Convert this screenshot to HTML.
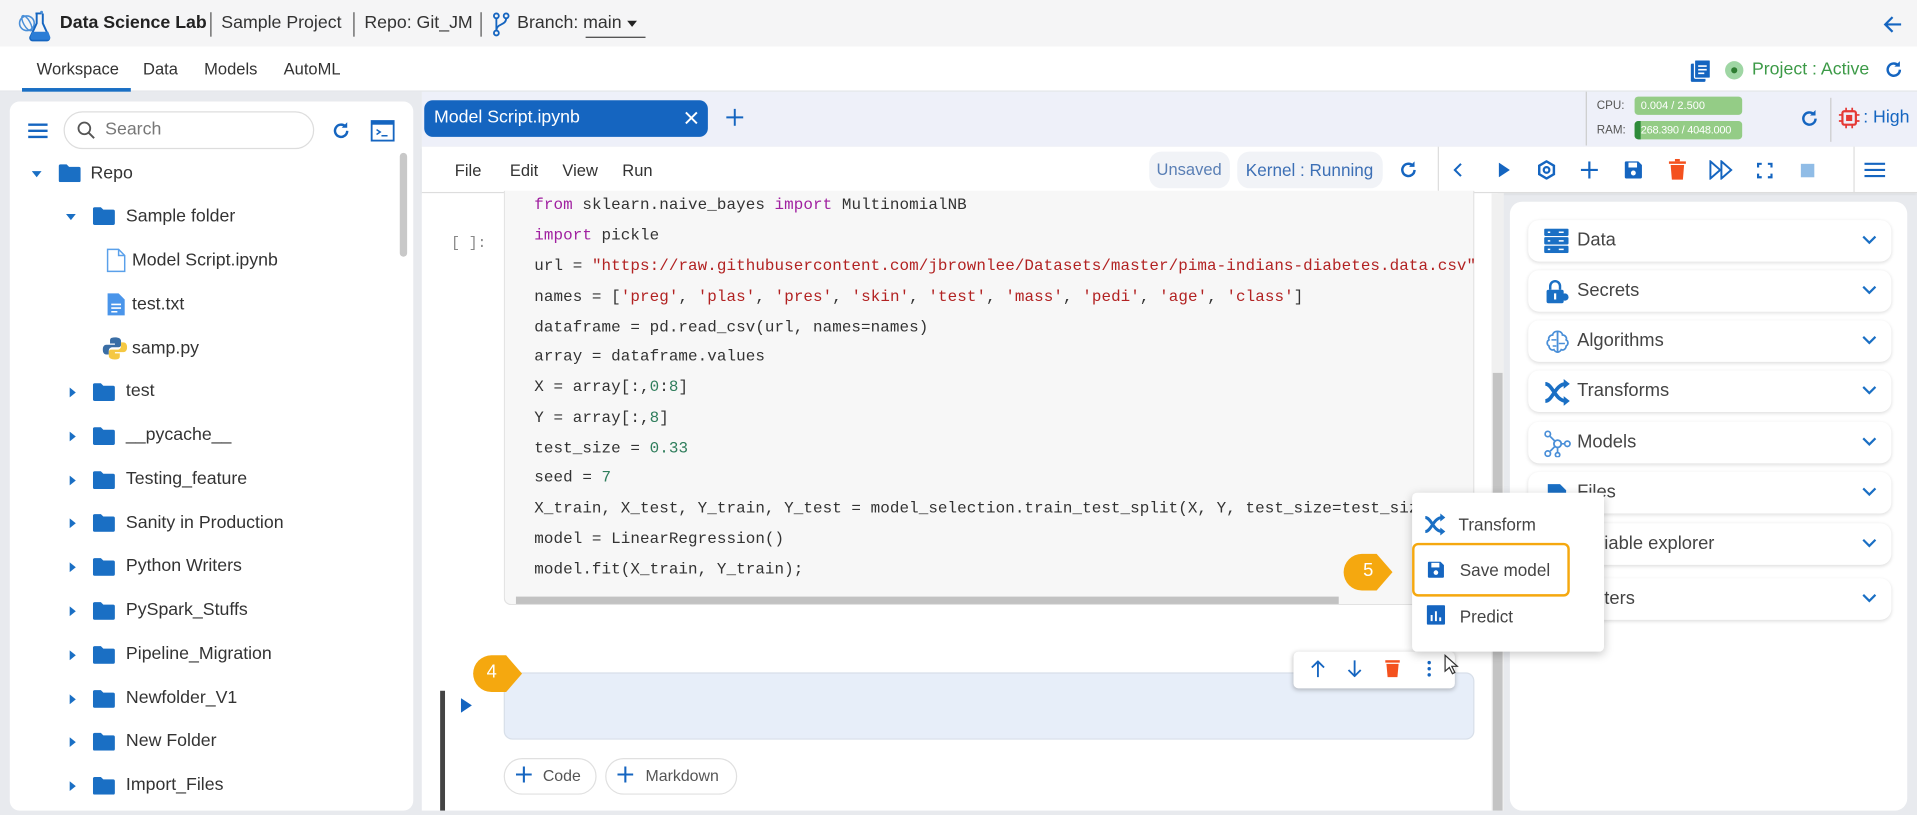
<!DOCTYPE html>
<html><head><meta charset="utf-8">
<style>
*{box-sizing:border-box;margin:0;padding:0}
html,body{width:1917px;height:815px;overflow:hidden;background:#e8eaee}
#s{position:absolute;left:0;top:0;width:1568px;height:667px;transform:scale(1.22258);transform-origin:0 0;font-family:"Liberation Sans",sans-serif;color:#333;background:#e8eaee}
.a{position:absolute}
.t{position:absolute;white-space:nowrap;font-size:14px;color:#333}
.code{position:absolute;left:437px;font-family:"Liberation Mono",monospace;font-size:13px;letter-spacing:0.06px;color:#333;white-space:pre}
.kw{color:#a020a0}.st{color:#b22222}.nm{color:#2e7d5b}
.acc{position:absolute;left:1250px;width:297px;height:34px;background:#fff;border-radius:9px;box-shadow:0 1px 3px rgba(0,0,0,.13)}
.acc span{position:absolute;left:40px;top:8px;font-size:15px;color:#444}
.acc svg.ch{position:absolute;right:12px;top:12px}
.acc .ic{position:absolute;left:13px;top:7px}
</style></head><body><div id="s">
<div class="a" style="left:0;top:0;width:1568px;height:38px;background:#f5f5f6"></div>
<svg class="a" style="left:14px;top:7px" width="28" height="28" viewBox="0 0 28 28"><circle cx="8" cy="12" r="6" fill="none" stroke="#4a8fd8" stroke-width="1.3"/><ellipse cx="8" cy="12" rx="7" ry="2.6" fill="none" stroke="#4a8fd8" stroke-width="1.2" transform="rotate(60 8 12)"/><path d="M15 4h5M16 4v8l-5 11a2 2 0 0 0 2 3h11a2 2 0 0 0 2-3l-5-11V4" fill="none" stroke="#1565c0" stroke-width="1.6"/><path d="M12.5 19h13l1.5 4a2 2 0 0 1-2 2.5H13a2 2 0 0 1-2-2.5z" fill="#2b7dd6"/><circle cx="20" cy="3" r="1.2" fill="#4a8fd8"/></svg>
<div class="t" style="left:49px;top:11px;font-weight:bold;font-size:14.5px;color:#222">Data Science Lab</div>
<div class="a" style="left:172px;top:10px;width:1px;height:20px;background:#555"></div>
<div class="t" style="left:181px;top:11px;font-size:14.5px">Sample Project</div>
<div class="a" style="left:289px;top:10px;width:1px;height:20px;background:#555"></div>
<div class="t" style="left:298px;top:11px;font-size:14.5px">Repo: Git_JM</div>
<div class="a" style="left:393px;top:10px;width:1px;height:20px;background:#555"></div>
<svg class="a" style="left:403px;top:10px" width="14" height="20" viewBox="0 0 14 20"><circle cx="3" cy="3" r="2" fill="none" stroke="#1565c0" stroke-width="1.5"/><circle cx="11" cy="3" r="2" fill="none" stroke="#1565c0" stroke-width="1.5"/><circle cx="3" cy="17" r="2" fill="none" stroke="#1565c0" stroke-width="1.5"/><path d="M3 5v10M11 5c0 6-8 4-8 10" fill="none" stroke="#1565c0" stroke-width="1.5"/></svg>
<div class="t" style="left:423px;top:11px;font-size:14.5px">Branch: main</div>
<div class="a" style="left:513px;top:17px;border-left:4px solid transparent;border-right:4px solid transparent;border-top:5px solid #222"></div>
<div class="a" style="left:479px;top:30px;width:49px;height:1px;background:#444"></div>
<svg class="a" style="left:1539px;top:11px" width="18" height="18" viewBox="0 0 18 18"><path d="M16 9H3M9 3L3 9l6 6" fill="none" stroke="#1565c0" stroke-width="1.8"/></svg>
<div class="a" style="left:0;top:38px;width:1568px;height:37px;background:#fff;border-bottom:1px solid #e2e4e8"></div>
<div class="t" style="left:30px;top:49px;font-size:13.5px">Workspace</div>
<div class="t" style="left:117px;top:49px;font-size:13.5px">Data</div>
<div class="t" style="left:167px;top:49px;font-size:13.5px">Models</div>
<div class="t" style="left:232px;top:49px;font-size:13.5px">AutoML</div>
<div class="a" style="left:18px;top:72px;width:89px;height:3px;background:#1a6fc4"></div>
<svg class="a" style="left:1382px;top:48px" width="18" height="20" viewBox="0 0 18 20"><rect x="1" y="4" width="12" height="15" rx="1" fill="#1565c0"/><rect x="4" y="1" width="13" height="15" rx="1" fill="#1565c0" stroke="#fff" stroke-width="1"/><path d="M7 6h7M7 9h7M7 12h5" stroke="#fff" stroke-width="1.3"/></svg>
<div class="a" style="left:1411px;top:50px;width:15px;height:15px;border-radius:50%;background:#9fd6a4"></div>
<div class="a" style="left:1416px;top:55px;width:5px;height:5px;border-radius:50%;background:#2e7d32"></div>
<div class="t" style="left:1433px;top:49px;font-size:14.5px;color:#3c9a47">Project : Active</div>
<svg class="a" style="left:1541px;top:49px" width="16" height="16" viewBox="0 0 16 16"><path d="M13 8a5 5 0 1 1-1.5-3.6" fill="none" stroke="#1565c0" stroke-width="2"/><path d="M13 1v4.5H8.5z" fill="#1565c0"/></svg>
<div class="a" style="left:8px;top:83px;width:330px;height:580px;background:#fff;border-radius:8px"></div>
<svg class="a" style="left:23px;top:100px" width="16" height="14"><path d="M0 2h16M0 7h16M0 12h16" stroke="#1565c0" stroke-width="2"/></svg>
<div class="a" style="left:52px;top:91px;width:205px;height:31px;border:1px solid #ddd;border-radius:16px"></div>
<svg class="a" style="left:63px;top:99px" width="15" height="15"><circle cx="6" cy="6" r="4.8" fill="none" stroke="#555" stroke-width="1.5"/><path d="M9.5 9.5l4.5 4.5" stroke="#555" stroke-width="1.6"/></svg>
<div class="t" style="left:86px;top:98px;font-size:14.5px;color:#777">Search</div>
<svg class="a" style="left:271px;top:99px" width="16" height="16" viewBox="0 0 16 16"><path d="M13 8a5 5 0 1 1-1.5-3.6" fill="none" stroke="#1565c0" stroke-width="2"/><path d="M13 1v4.5H8.5z" fill="#1565c0"/></svg>
<svg class="a" style="left:303px;top:98px" width="20" height="18"><rect x="1" y="1" width="18" height="16" fill="none" stroke="#1565c0" stroke-width="1.5"/><rect x="1" y="1" width="18" height="3" fill="#1565c0"/><path d="M5 8l3 2-3 2M9 13h5" fill="none" stroke="#1565c0" stroke-width="1.2"/></svg>
<div class="a" style="left:327px;top:125px;width:6px;height:85px;background:#c8c8c8;border-radius:3px"></div>
<svg width="0" height="0" style="position:absolute"><defs>
<symbol id="fo" viewBox="0 0 18 15"><path d="M0 2a1.5 1.5 0 0 1 1.5-1.5h5l2 2h8A1.5 1.5 0 0 1 18 4v9.5a1.5 1.5 0 0 1-1.5 1.5h-15A1.5 1.5 0 0 1 0 13.5z" fill="#1a6fc4"/></symbol>
<symbol id="ar" viewBox="0 0 8 8"><path d="M2 0l5 4-5 4z" fill="#1a6fc4"/></symbol>
<symbol id="ad" viewBox="0 0 8 8"><path d="M0 2l4 5 4-5z" fill="#1a6fc4"/></symbol>
<symbol id="cv" viewBox="0 0 12 8"><path d="M1 1.5l5 5 5-5" fill="none" stroke="#1a6fc4" stroke-width="1.8"/></symbol>
</defs></svg>
<svg class="a" style="left:26px;top:138px" width="8" height="8"><use href="#ad"/></svg>
<svg class="a" style="left:48px;top:134px" width="18" height="15"><use href="#fo"/></svg>
<div class="t" style="left:74px;top:134px;font-size:14.5px">Repo</div>
<svg class="a" style="left:54px;top:173px" width="8" height="8"><use href="#ad"/></svg>
<svg class="a" style="left:76px;top:169px" width="18" height="15"><use href="#fo"/></svg>
<div class="t" style="left:103px;top:169px;font-size:14.5px">Sample folder</div>
<svg class="a" style="left:87px;top:203px" width="16" height="20"><path d="M1 1h9l5 5v13H1z" fill="#fff" stroke="#5aa0ea" stroke-width="1.2"/><path d="M10 1v5h5" fill="none" stroke="#5aa0ea" stroke-width="1.2"/></svg>
<div class="t" style="left:108px;top:205px;font-size:14.5px">Model Script.ipynb</div>
<svg class="a" style="left:87px;top:239px" width="16" height="20"><path d="M1 1h9l5 5v13H1z" fill="#4a95ea"/><path d="M4 10h8M4 13h8M4 16h5" stroke="#fff" stroke-width="1.3"/></svg>
<div class="t" style="left:108px;top:241px;font-size:14.5px">test.txt</div>
<svg class="a" style="left:84px;top:275px" width="20" height="20" viewBox="0 0 20 20"><path d="M10 1c-4 0-4 1.5-4 3v2h4v1H3c-2 0-3 2-3 4s1 4 3 4h2v-3c0-2 1.5-3 3-3h5c1.5 0 2-1 2-2V4c0-2-2-3-5-3z" fill="#3a6ea5"/><path d="M10 19c4 0 4-1.5 4-3v-2h-4v-1h7c2 0 3-2 3-4s-1-4-3-4h-2v3c0 2-1.5 3-3 3H7c-1.5 0-2 1-2 2v3c0 2 2 3 5 3z" fill="#f5c842"/></svg>
<div class="t" style="left:108px;top:277px;font-size:14.5px">samp.py</div>
<div class="a" style="left:345px;top:75px;width:950px;height:45px;background:#eef0f9"></div>
<div class="a" style="left:347px;top:82px;width:232px;height:30px;background:#1565c0;border-radius:7px"></div>
<div class="t" style="left:355px;top:88px;font-size:14.5px;color:#fff">Model Script.ipynb</div>
<svg class="a" style="left:560px;top:91px" width="11" height="11"><path d="M1 1l9 9M10 1l-9 9" stroke="#fff" stroke-width="1.6"/></svg>
<svg class="a" style="left:594px;top:89px" width="14" height="14"><path d="M7 0v14M0 7h14" stroke="#1565c0" stroke-width="1.6"/></svg>
<div class="a" style="left:1295px;top:75px;width:273px;height:45px;background:#eef0f9"></div>
<div class="a" style="left:1297px;top:75px;width:1px;height:44px;background:#ccc"></div>
<div class="t" style="left:1306px;top:81px;font-size:9.5px;color:#555">CPU:</div>
<div class="a" style="left:1337px;top:79px;width:88px;height:15px;background:#94cc86;border-radius:3px"></div>
<div class="t" style="left:1342px;top:81px;font-size:9px;color:#fff">0.004 / 2.500</div>
<div class="t" style="left:1306px;top:101px;font-size:9.5px;color:#555">RAM:</div>
<div class="a" style="left:1337px;top:99px;width:88px;height:15px;background:#94cc86;border-radius:3px"></div>
<div class="a" style="left:1337px;top:99px;width:5px;height:15px;background:#2e8b3a;border-radius:3px 0 0 3px"></div>
<div class="t" style="left:1342px;top:101px;font-size:9px;color:#fff;letter-spacing:-0.2px">268.390 / 4048.000</div>
<svg class="a" style="left:1472px;top:89px" width="16" height="16" viewBox="0 0 16 16"><path d="M13 8a5 5 0 1 1-1.5-3.6" fill="none" stroke="#1565c0" stroke-width="2"/><path d="M13 1v4.5H8.5z" fill="#1565c0"/></svg>
<div class="a" style="left:1497px;top:80px;width:1px;height:36px;background:#ccc"></div>
<svg class="a" style="left:1504px;top:88px" width="17" height="17" viewBox="0 0 17 17"><rect x="3" y="3" width="11" height="11" rx="1.5" fill="none" stroke="#e53935" stroke-width="1.8"/><rect x="6" y="6" width="5" height="5" fill="#e53935"/><path d="M6 0v3M11 0v3M6 14v3M11 14v3M0 6h3M0 11h3M14 6h3M14 11h3" stroke="#e53935" stroke-width="1.4"/></svg>
<div class="t" style="left:1524px;top:88px;font-size:14.5px;color:#1565c0">: High</div>
<div class="a" style="left:345px;top:120px;width:1223px;height:38px;background:#fff;border-bottom:1px solid #ddd;box-shadow:0 1px 2px rgba(0,0,0,.08)"></div>
<div class="t" style="left:372px;top:132px;font-size:13.5px">File</div>
<div class="t" style="left:417px;top:132px;font-size:13.5px">Edit</div>
<div class="t" style="left:460px;top:132px;font-size:13.5px">View</div>
<div class="t" style="left:509px;top:132px;font-size:13.5px">Run</div>
<div class="a" style="left:940px;top:124px;width:66px;height:30px;background:#f1f3f7;border-radius:10px"></div>
<div class="t" style="left:946px;top:131px;font-size:13.5px;color:#5a7fb5">Unsaved</div>
<div class="a" style="left:1012px;top:124px;width:119px;height:30px;background:#f1f3f7;border-radius:10px"></div>
<div class="t" style="left:1019px;top:131px;font-size:14px;color:#3c6fb5">Kernel : Running</div>
<svg class="a" style="left:1144px;top:131px" width="16" height="16" viewBox="0 0 16 16"><path d="M13 8a5 5 0 1 1-1.5-3.6" fill="none" stroke="#1565c0" stroke-width="2"/><path d="M13 1v4.5H8.5z" fill="#1565c0"/></svg>
<div class="a" style="left:1176px;top:120px;width:1px;height:38px;background:#ddd"></div>
<svg class="a" style="left:1188px;top:133px" width="10" height="12"><path d="M7 1L2 6l5 5" fill="none" stroke="#1565c0" stroke-width="1.7"/></svg>
<svg class="a" style="left:1225px;top:133px" width="10" height="12"><path d="M1 0l9 6-9 6z" fill="#1565c0"/></svg>
<svg class="a" style="left:1257px;top:131px" width="16" height="16" viewBox="0 0 16 16"><path d="M8 1l6 3.5v7L8 15l-6-3.5v-7z" fill="none" stroke="#1565c0" stroke-width="2"/><circle cx="8" cy="8" r="2.3" fill="none" stroke="#1565c0" stroke-width="1.8"/></svg>
<svg class="a" style="left:1293px;top:132px" width="14" height="14"><path d="M7 0v14M0 7h14" stroke="#1565c0" stroke-width="1.8"/></svg>
<svg class="a" style="left:1328px;top:131px" width="16" height="16" viewBox="0 0 16 16"><path d="M1 2a1 1 0 0 1 1-1h10l3 3v10a1 1 0 0 1-1 1H2a1 1 0 0 1-1-1z" fill="#1565c0"/><rect x="4" y="2" width="7" height="4" fill="#fff"/><circle cx="8" cy="10.5" r="2" fill="#fff"/></svg>
<svg class="a" style="left:1365px;top:130px" width="14" height="17"><rect x="0" y="2" width="14" height="2" fill="#f4511e"/><rect x="5" y="0" width="4" height="2" fill="#f4511e"/><path d="M1.5 5h11l-1 12h-9z" fill="#f4511e"/></svg>
<svg class="a" style="left:1398px;top:131px" width="20" height="16"><path d="M1 1l8 7-8 7zM10 1l8 7-8 7z" fill="none" stroke="#1565c0" stroke-width="1.6"/></svg>
<svg class="a" style="left:1437px;top:133px" width="13" height="13"><path d="M1 4V1h3M9 1h3v3M12 9v3H9M4 12H1V9" fill="none" stroke="#1565c0" stroke-width="1.8"/></svg>
<div class="a" style="left:1473px;top:134px;width:11px;height:11px;background:#90bce6"></div>
<div class="a" style="left:1516px;top:120px;width:1px;height:38px;background:#ddd"></div>
<svg class="a" style="left:1525px;top:132px" width="17" height="14"><path d="M0 2h17M0 7h17M0 12h17" stroke="#1565c0" stroke-width="1.8"/></svg>
<div class="a" style="left:345px;top:158px;width:880px;height:505px;background:#fff"></div>
<div class="a" style="left:1220px;top:158px;width:10px;height:505px;background:#f0f0f0"></div>
<div class="a" style="left:1221px;top:305px;width:8px;height:358px;background:#c4c4c4"></div>
<div class="a" style="left:412px;top:156px;width:794px;height:339px;background:#f7f7f7;border:1px solid #e2e2e2;border-top:none;border-radius:0 0 6px 6px"></div>
<div class="a" style="left:422px;top:488px;width:673px;height:6px;background:#c2c2c2"></div>
<div class="t" style="left:369px;top:192px;font-size:12px;color:#888;font-family:'Liberation Mono',monospace">[ ]:</div>
<div class="code" style="top:160px"><span class="kw">from</span> sklearn.naive_bayes <span class="kw">import</span> MultinomialNB</div>
<div class="code" style="top:185px"><span class="kw">import</span> pickle</div>
<div class="code" style="top:210px">url = <span class="st">"https://raw.githubusercontent.com/jbrownlee/Datasets/master/pima-indians-diabetes.data.csv"</span></div>
<div class="code" style="top:235px">names = [<span class="st">'preg'</span>, <span class="st">'plas'</span>, <span class="st">'pres'</span>, <span class="st">'skin'</span>, <span class="st">'test'</span>, <span class="st">'mass'</span>, <span class="st">'pedi'</span>, <span class="st">'age'</span>, <span class="st">'class'</span>]</div>
<div class="code" style="top:260px">dataframe = pd.read_csv(url, names=names)</div>
<div class="code" style="top:284px">array = dataframe.values</div>
<div class="code" style="top:309px">X = array[:,<span class="nm">0</span>:<span class="nm">8</span>]</div>
<div class="code" style="top:334px">Y = array[:,<span class="nm">8</span>]</div>
<div class="code" style="top:359px">test_size = <span class="nm">0.33</span></div>
<div class="code" style="top:383px">seed = <span class="nm">7</span></div>
<div class="code" style="top:408px">X_train, X_test, Y_train, Y_test = model_selection.train_test_split(X, Y, test_size=test_size</div>
<div class="code" style="top:433px">model = LinearRegression()</div>
<div class="code" style="top:458px">model.fit(X_train, Y_train);</div>
<div class="a" style="left:360px;top:565px;width:4px;height:98px;background:#444"></div>
<svg class="a" style="left:377px;top:571px" width="9" height="12"><path d="M0 0l9 6-9 6z" fill="#1565c0"/></svg>
<div class="a" style="left:412px;top:550px;width:794px;height:55px;background:#e7eef9;border:1px solid #d8dfe9;border-radius:7px"></div>
<div class="a" style="left:1058px;top:533px;width:132px;height:30px;background:#fff;border-radius:4px;box-shadow:0 1px 4px rgba(0,0,0,.25)"></div>
<svg class="a" style="left:1072px;top:540px" width="12" height="14"><path d="M6 14V1M1 6l5-5 5 5" fill="none" stroke="#1565c0" stroke-width="1.5"/></svg>
<svg class="a" style="left:1102px;top:540px" width="12" height="14"><path d="M6 0v13M1 8l5 5 5-5" fill="none" stroke="#1565c0" stroke-width="1.5"/></svg>
<svg class="a" style="left:1133px;top:539px" width="12" height="15"><rect x="0" y="1" width="12" height="2" fill="#f4511e"/><path d="M1 4h10l-1 11H2z" fill="#f4511e"/></svg>
<svg class="a" style="left:1167px;top:540px" width="4" height="14"><circle cx="2" cy="2" r="1.4" fill="#1565c0"/><circle cx="2" cy="7" r="1.4" fill="#1565c0"/><circle cx="2" cy="12" r="1.4" fill="#1565c0"/></svg>
<svg class="a" style="left:1181px;top:535px" width="12" height="18"><path d="M1 1v13l3.5-3 2.5 5 2-1-2.5-5H11z" fill="#fff" stroke="#333" stroke-width="1"/></svg>
<div class="a" style="left:412px;top:620px;width:76px;height:30px;border:1px solid #e0e0e0;border-radius:15px"></div>
<svg class="a" style="left:422px;top:627px" width="13" height="13"><path d="M6.5 0v13M0 6.5h13" stroke="#1565c0" stroke-width="1.7"/></svg>
<div class="t" style="left:444px;top:627px;font-size:13px;color:#555">Code</div>
<div class="a" style="left:495px;top:620px;width:108px;height:30px;border:1px solid #e0e0e0;border-radius:15px"></div>
<svg class="a" style="left:505px;top:627px" width="13" height="13"><path d="M6.5 0v13M0 6.5h13" stroke="#1565c0" stroke-width="1.7"/></svg>
<div class="t" style="left:528px;top:627px;font-size:13px;color:#555">Markdown</div>
<svg class="a" style="left:386px;top:535px" width="56" height="32" viewBox="0 0 56 32"><path d="M16 1h12l13 15-13 15H16A15 15 0 0 1 16 1z" fill="#f5a80f"/></svg>
<div class="t" style="left:398px;top:541px;font-size:15px;color:#fff">4</div>
<div class="a" style="left:1235px;top:165px;width:325px;height:498px;background:#fff;border-radius:10px"></div>
<div class="acc" style="top:180px"><svg class="ic" width="20" height="20" viewBox="0 0 20 20"><rect x="0" y="0" width="20" height="6" rx="1" fill="#1a6fc4"/><rect x="0" y="7" width="20" height="6" rx="1" fill="#1a6fc4"/><rect x="0" y="14" width="20" height="6" rx="1" fill="#1a6fc4"/><path d="M3 3h2M3 10h2M3 17h2M12 3h4M12 10h4M12 17h4" stroke="#fff" stroke-width="1.2"/></svg><span>Data</span><svg class="ch" width="12" height="8"><use href="#cv"/></svg></div>
<div class="acc" style="top:221px"><svg class="ic" width="22" height="22" viewBox="0 0 22 22"><path d="M5 9V6a4 4 0 0 1 8 0v3" fill="none" stroke="#1a6fc4" stroke-width="2"/><rect x="2" y="9" width="14" height="11" rx="1.5" fill="#1a6fc4"/><circle cx="17" cy="15" r="3" fill="#1a6fc4"/><path d="M9 12v5" stroke="#fff" stroke-width="1.8"/></svg><span>Secrets</span><svg class="ch" width="12" height="8"><use href="#cv"/></svg></div>
<div class="acc" style="top:262px"><svg class="ic" width="22" height="22" viewBox="0 0 22 22"><path d="M11 2c-3 0-4 2-4 3-2 0-4 2-3 4-2 1-2 4 0 5 0 2 2 4 4 3 1 2 3 2 3 2zM11 2c3 0 4 2 4 3 2 0 4 2 3 4 2 1 2 4 0 5 0 2-2 4-4 3-1 2-3 2-3 2" fill="none" stroke="#4a8fd8" stroke-width="1.4"/><path d="M11 2v17M6 9h4M12 12h5M7 14h3" stroke="#4a8fd8" stroke-width="1.2"/></svg><span>Algorithms</span><svg class="ch" width="12" height="8"><use href="#cv"/></svg></div>
<div class="acc" style="top:303px"><svg class="ic" width="22" height="22" viewBox="0 0 22 22"><path d="M1 4c6 0 8 14 17 14M1 18C7 18 9 4 18 4" fill="none" stroke="#1a6fc4" stroke-width="3"/><path d="M16 0l5 4-5 4zM16 14l5 4-5 4z" fill="#1a6fc4"/></svg><span>Transforms</span><svg class="ch" width="12" height="8"><use href="#cv"/></svg></div>
<div class="acc" style="top:345px"><svg class="ic" width="22" height="22" viewBox="0 0 22 22"><circle cx="11" cy="11" r="3" fill="none" stroke="#4a8fd8" stroke-width="1.5"/><circle cx="3" cy="3" r="2.2" fill="none" stroke="#4a8fd8" stroke-width="1.4"/><circle cx="3" cy="19" r="2.2" fill="none" stroke="#4a8fd8" stroke-width="1.4"/><circle cx="19" cy="11" r="2.2" fill="none" stroke="#4a8fd8" stroke-width="1.4"/><circle cx="11" cy="20" r="1.8" fill="none" stroke="#4a8fd8" stroke-width="1.4"/><path d="M5 5l4 4M5 17l4-4M14 11h3M11 14v4" stroke="#4a8fd8" stroke-width="1.4"/></svg><span>Models</span><svg class="ch" width="12" height="8"><use href="#cv"/></svg></div>
<div class="acc" style="top:386px"><svg class="ic" width="22" height="22" viewBox="0 0 22 22"><path d="M3 3h10l5 5v12H3z" fill="#1a6fc4"/></svg><span>Files</span><svg class="ch" width="12" height="8"><use href="#cv"/></svg></div>
<div class="acc" style="top:428px"><span>Variable explorer</span><svg class="ch" width="12" height="8"><use href="#cv"/></svg></div>
<div class="acc" style="top:473px"><span>Writers</span><svg class="ch" width="12" height="8"><use href="#cv"/></svg></div>
<div class="a" style="left:1155px;top:403px;width:157px;height:130px;background:#fff;border-radius:4px;box-shadow:0 2px 8px rgba(0,0,0,.22)"></div>
<svg class="a" style="left:1164px;top:420px" width="20" height="18" viewBox="0 0 22 22"><path d="M1 4c6 0 8 14 17 14M1 18C7 18 9 4 18 4" fill="none" stroke="#1a6fc4" stroke-width="3"/><path d="M16 0l5 4-5 4zM16 14l5 4-5 4z" fill="#1a6fc4"/></svg>
<div class="t" style="left:1193px;top:421px;font-size:14px;color:#444">Transform</div>
<div class="a" style="left:1155px;top:444px;width:129px;height:44px;border:2.5px solid #f5a80f;border-radius:5px"></div>
<svg class="a" style="left:1167px;top:458px" width="15" height="16" viewBox="0 0 16 16"><path d="M1 2a1 1 0 0 1 1-1h10l3 3v10a1 1 0 0 1-1 1H2a1 1 0 0 1-1-1z" fill="#1565c0"/><rect x="4" y="2" width="7" height="4" fill="#fff"/><circle cx="8" cy="10.5" r="2" fill="#fff"/></svg>
<div class="t" style="left:1194px;top:458px;font-size:14px;color:#444">Save model</div>
<svg class="a" style="left:1167px;top:495px" width="15" height="16"><rect width="15" height="16" rx="1" fill="#1565c0"/><path d="M4 13V8M7.5 13V5M11 13v-3" stroke="#fff" stroke-width="1.6"/></svg>
<div class="t" style="left:1194px;top:496px;font-size:14px;color:#444">Predict</div>
<svg class="a" style="left:1098px;top:452px" width="56" height="32" viewBox="0 0 56 32"><path d="M16 1h12l13 15-13 15H16A15 15 0 0 1 16 1z" fill="#f5a80f"/></svg>
<div class="t" style="left:1115px;top:458px;font-size:15px;color:#fff">5</div>
<div class="a" style="left:0;top:0">
<svg class="a" style="left:55px;top:317px" width="8" height="8"><use href="#ar"/></svg><svg class="a" style="left:76px;top:313px" width="18" height="15"><use href="#fo"/></svg><div class="t" style="left:103px;top:312px;font-size:14.5px">test</div>
<svg class="a" style="left:55px;top:353px" width="8" height="8"><use href="#ar"/></svg><svg class="a" style="left:76px;top:349px" width="18" height="15"><use href="#fo"/></svg><div class="t" style="left:103px;top:348px;font-size:14.5px">__pycache__</div>
<svg class="a" style="left:55px;top:389px" width="8" height="8"><use href="#ar"/></svg><svg class="a" style="left:76px;top:385px" width="18" height="15"><use href="#fo"/></svg><div class="t" style="left:103px;top:384px;font-size:14.5px">Testing_feature</div>
<svg class="a" style="left:55px;top:424px" width="8" height="8"><use href="#ar"/></svg><svg class="a" style="left:76px;top:420px" width="18" height="15"><use href="#fo"/></svg><div class="t" style="left:103px;top:420px;font-size:14.5px">Sanity in Production</div>
<svg class="a" style="left:55px;top:460px" width="8" height="8"><use href="#ar"/></svg><svg class="a" style="left:76px;top:456px" width="18" height="15"><use href="#fo"/></svg><div class="t" style="left:103px;top:455px;font-size:14.5px">Python Writers</div>
<svg class="a" style="left:55px;top:496px" width="8" height="8"><use href="#ar"/></svg><svg class="a" style="left:76px;top:492px" width="18" height="15"><use href="#fo"/></svg><div class="t" style="left:103px;top:491px;font-size:14.5px">PySpark_Stuffs</div>
<svg class="a" style="left:55px;top:532px" width="8" height="8"><use href="#ar"/></svg><svg class="a" style="left:76px;top:528px" width="18" height="15"><use href="#fo"/></svg><div class="t" style="left:103px;top:527px;font-size:14.5px">Pipeline_Migration</div>
<svg class="a" style="left:55px;top:568px" width="8" height="8"><use href="#ar"/></svg><svg class="a" style="left:76px;top:564px" width="18" height="15"><use href="#fo"/></svg><div class="t" style="left:103px;top:563px;font-size:14.5px">Newfolder_V1</div>
<svg class="a" style="left:55px;top:603px" width="8" height="8"><use href="#ar"/></svg><svg class="a" style="left:76px;top:599px" width="18" height="15"><use href="#fo"/></svg><div class="t" style="left:103px;top:598px;font-size:14.5px">New Folder</div>
<svg class="a" style="left:55px;top:639px" width="8" height="8"><use href="#ar"/></svg><svg class="a" style="left:76px;top:635px" width="18" height="15"><use href="#fo"/></svg><div class="t" style="left:103px;top:634px;font-size:14.5px">Import_Files</div>
</div>
</div></body></html>
